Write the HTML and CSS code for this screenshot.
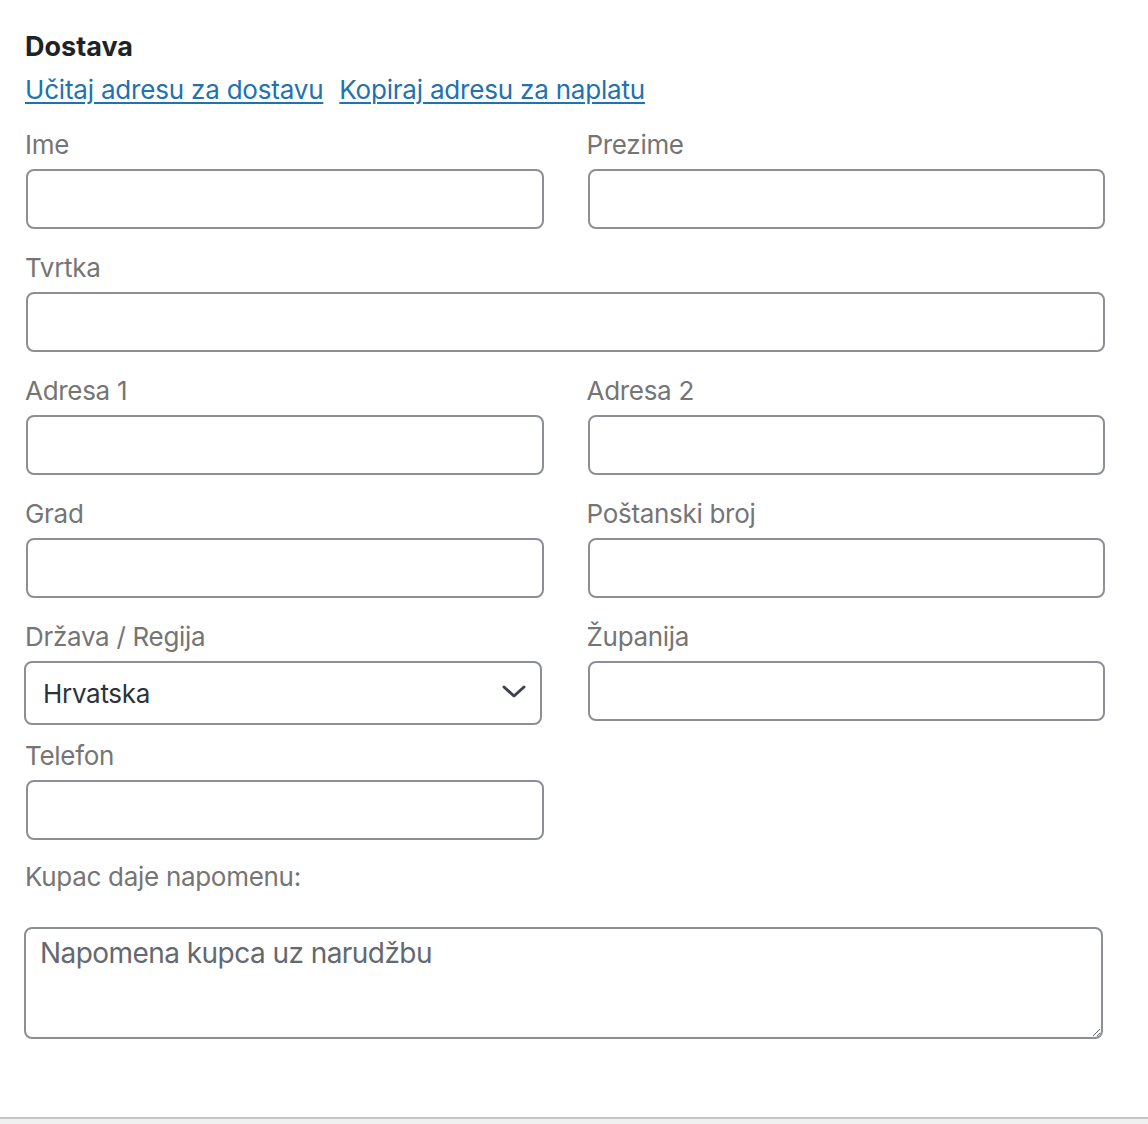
FILE: index.html
```html
<!DOCTYPE html>
<html lang="hr">
<head>
<meta charset="utf-8">
<title>Dostava</title>
<link rel="stylesheet" href="styles.css">
</head>
<body>
<div class="panel">
  <h3 class="title">Dostava</h3>
  <div class="links">
    <a href="#" class="link">Učitaj adresu za dostavu</a>
    <a href="#" class="link">Kopiraj adresu za naplatu</a>
  </div>

  <div class="row">
    <div class="field"><label class="label">Ime</label><input class="input" type="text"></div>
    <div class="field"><label class="label">Prezime</label><input class="input" type="text"></div>
  </div>
  <div class="row">
    <div class="field field-full"><label class="label">Tvrtka</label><input class="input" type="text"></div>
  </div>
  <div class="row">
    <div class="field"><label class="label">Adresa 1</label><input class="input" type="text"></div>
    <div class="field"><label class="label">Adresa 2</label><input class="input" type="text"></div>
  </div>
  <div class="row">
    <div class="field"><label class="label">Grad</label><input class="input" type="text"></div>
    <div class="field"><label class="label">Poštanski broj</label><input class="input" type="text"></div>
  </div>
  <div class="row row-select">
    <div class="field">
      <label class="label">Država / Regija</label>
      <div class="select-wrap">
        <select class="select"><option>Hrvatska</option></select>
        <svg class="chevron" width="24" height="14" viewBox="0 0 24 14"><path d="M2 2 L12 11 L22 2" fill="none" stroke="#3c434a" stroke-width="3" stroke-linecap="round" stroke-linejoin="round"/></svg>
      </div>
    </div>
    <div class="field"><label class="label">Županija</label><input class="input" type="text"></div>
  </div>
  <div class="row">
    <div class="field"><label class="label">Telefon</label><input class="input" type="text"></div>
    <div class="field"></div>
  </div>

  <div class="note">
    <label class="label note-label">Kupac daje napomenu:</label>
    <textarea class="textarea" placeholder="Napomena kupca uz narudžbu"></textarea>
  </div>
</div>
<div class="footer-line"></div>
</body>
</html>
```

FILE: styles.css
```css
html, body {
  margin: 0;
  padding: 0;
  background: #f0f0f1;
}
body {
  font-family: Inter, "Noto Sans", sans-serif;
  color: #3c434a;
  letter-spacing: -0.3px;
}
.panel {
  background: #fff;
  padding: 29px 43px 0 26px;
  height: 1088px;
  border-bottom: 2px solid #c3c4c7;
}
.title {
  margin: 0;
  font-size: 27px;
  line-height: 36px;
  font-weight: 700;
  letter-spacing: 0;
  color: #1d2327;
  margin-left: -1px;
}
.links {
  display: flex;
  gap: 16px;
  margin-top: 7px;
  margin-left: -1px;
}
.link {
  font-size: 26px;
  line-height: 36px;
  letter-spacing: -0.2px;
  color: #2271b1;
  text-decoration: underline;
  text-underline-offset: 3px;
  text-decoration-thickness: 2px;
}
.row {
  display: flex;
  gap: 44px;
}
.links + .row { margin-top: 19px; }
.row + .row { margin-top: 21px; }
.field {
  flex: 1 1 0;
  min-width: 0;
  display: flex;
  flex-direction: column;
}
.label {
  display: block;
  font-size: 26px;
  line-height: 36px;
  color: #757575;
  margin-bottom: 6px;
  margin-left: -1px;
}
.input {
  box-sizing: border-box;
  height: 60px;
  width: 100%;
  border: 2px solid #8c8f94;
  border-radius: 8px;
  background: #fff;
  font-size: 26px;
  padding: 0 16px;
  margin: 0;
  outline: none;
}
.row-select + .row { margin-top: 13px; }
.select-wrap {
  position: relative;
  margin-left: -2px;
  margin-right: 2px;
}
.select {
  -webkit-appearance: none;
  appearance: none;
  box-sizing: border-box;
  width: 100%;
  height: 64px;
  border: 2px solid #8c8f94;
  border-radius: 8px;
  background: #fff;
  font-family: Inter, "Noto Sans", sans-serif;
  letter-spacing: -0.3px;
  font-size: 26px;
  color: #2c3338;
  padding: 0 48px 0 17px;
  margin: 0;
  outline: none;
}
.chevron {
  position: absolute;
  right: 16px;
  top: 24px;
  pointer-events: none;
}
.note {
  margin-top: 19px;
}
.note-label {
  margin-bottom: 32px;
}
.textarea {
  display: block;
  box-sizing: border-box;
  width: 1079px;
  height: 112px;
  margin-left: -2px;
  border: 2px solid #8c8f94;
  border-radius: 8px;
  background: #fff;
  font-family: Inter, "Noto Sans", sans-serif;
  font-size: 28px;
  letter-spacing: -0.55px;
  line-height: 36px;
  padding: 6px 14px;
  color: #50575e;
  outline: none;
  resize: vertical;
}
.textarea::placeholder {
  color: #646970;
  opacity: 1;
}
.footer-line {
  height: 3px;
}
```
